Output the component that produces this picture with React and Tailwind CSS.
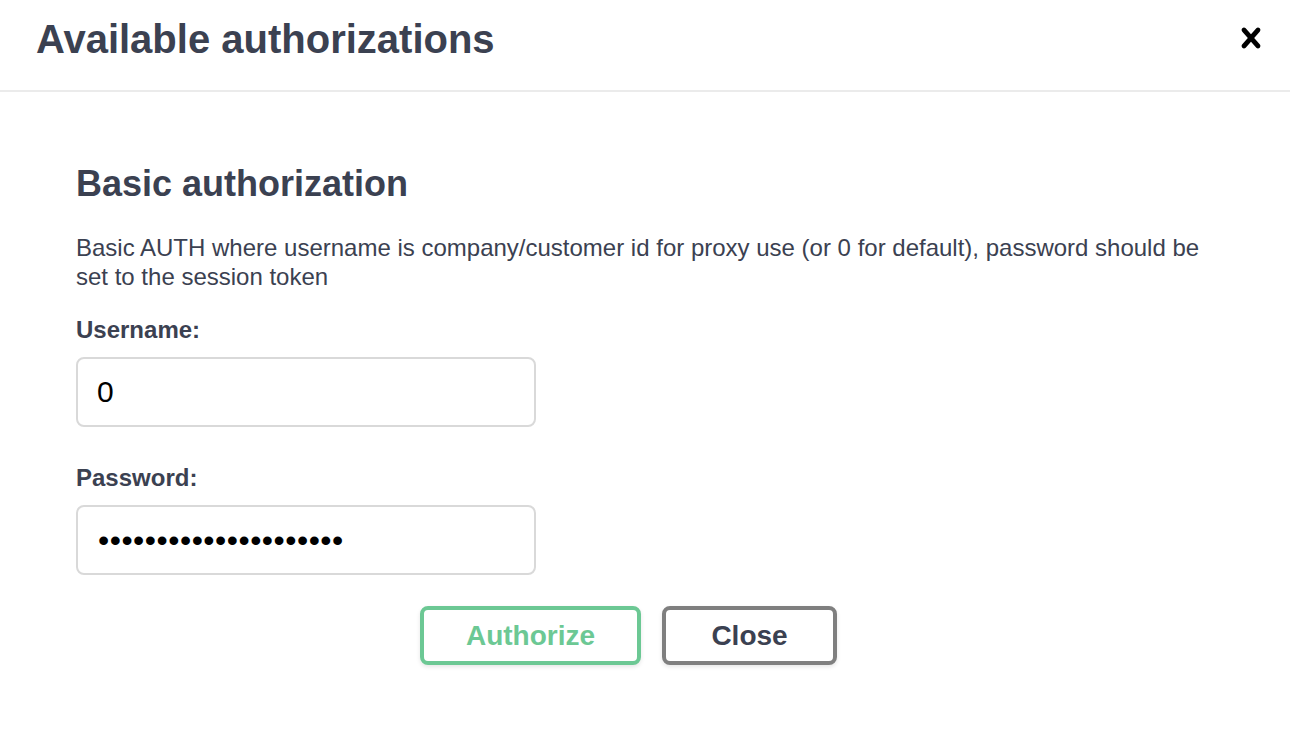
import React from "react";

export default function App() {
  const font = { fontFamily: '"Liberation Sans", Arial, Helvetica, sans-serif' };
  return (
    <div className="w-[1290px] h-[740px] bg-white text-[#3b4151] overflow-hidden" style={font}>
      <div className="h-[92px] border-b-2 border-[#ebebeb] flex items-start justify-between pl-[36px] pr-[19px] pt-[19px]">
        <h3 className="text-[40px] leading-[40px] font-bold">Available authorizations</h3>
        <button className="-mt-[1px] w-[40px] h-[40px] flex items-center justify-center" aria-label="Close">
          <svg width="40" height="40" viewBox="0 0 20 20">
            <path
              fill="#000"
              d="M14.348 14.849c-.469.469-1.229.469-1.697 0L10 11.819l-2.651 3.029c-.469.469-1.229.469-1.697 0-.469-.469-.469-1.229 0-1.697l2.758-3.15-2.759-3.152c-.469-.469-.469-1.228 0-1.697.469-.469 1.228-.469 1.697 0L10 8.183l2.651-3.031c.469-.469 1.228-.469 1.697 0 .469.469.469 1.229 0 1.697l-2.758 3.152 2.758 3.15c.469.469.469 1.229 0 1.698z"
            />
          </svg>
        </button>
      </div>

      <div className="px-[76px] pt-[72px]">
        <h4 className="text-[36px] leading-[40px] font-bold">Basic authorization</h4>
        <p className="mt-[29px] text-[24px] leading-[29px]">
          Basic AUTH where username is company/customer id for proxy use (or 0 for default), password should be set to the session token
        </p>

        <label className="block mt-[24px] text-[24px] leading-[29px] font-bold">Username:</label>
        <input
          type="text"
          readOnly
          defaultValue="0"
          className="block mt-[13px] w-[460px] h-[70px] border-2 border-[#d9d9d9] rounded-[8px] px-[19px] text-[30px] text-black bg-white outline-none"
          style={font}
        />

        <label className="block mt-[36px] text-[24px] leading-[29px] font-bold">Password:</label>
        <input
          type="password"
          readOnly
          defaultValue="abcdefghijklmnopqrstu"
          className="block mt-[13px] w-[460px] h-[70px] border-2 border-[#d9d9d9] rounded-[8px] px-[20px] text-[32px] tracking-[0.5px] text-black bg-white outline-none"
          style={font}
        />

        <div className="mt-[31px] flex justify-center">
          <button className="w-[221px] h-[59px] mr-[21px] border-4 border-[#6cc894] rounded-[8px] text-[#6cc894] text-[28px] font-bold bg-white shadow-[0_2px_4px_rgba(0,0,0,0.1)]">
            Authorize
          </button>
          <button className="w-[175px] h-[59px] mr-[33px] border-4 border-[#7f7f7f] rounded-[8px] text-[#3b4151] text-[28px] font-bold bg-white shadow-[0_2px_4px_rgba(0,0,0,0.1)]">
            Close
          </button>
        </div>
      </div>
    </div>
  );
}
